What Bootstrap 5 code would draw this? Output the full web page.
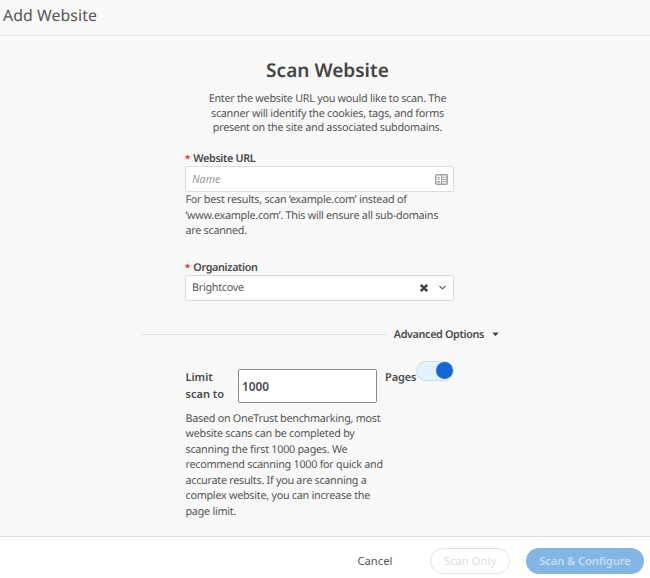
<!DOCTYPE html>
<html lang="en">
<head>
<meta charset="utf-8">
<meta name="viewport" content="width=device-width, initial-scale=1">
<title>Add Website</title>
<link href="https://cdn.jsdelivr.net/npm/bootstrap@5.3.0/dist/css/bootstrap.min.css" rel="stylesheet">
<style>
body{font-family:"Noto Sans","Open Sans",sans-serif;font-size:10.8px;line-height:15.5px;color:#565656;background:#f8f8f8;height:578px;overflow:hidden;text-rendering:geometricPrecision;letter-spacing:-.27px}
.top-bar{height:36px;border-color:#e0e0e0!important;padding:0 3px 5px}
.top-bar h1{font-size:15.8px;line-height:20px;color:#555;letter-spacing:.1px}
.center-block{margin-left:5px;padding-top:.1px}
.scan-title{font-size:19px;line-height:26px;margin-top:21px;color:#444;letter-spacing:.03px}
.intro{line-height:14.4px;margin-top:8px;padding-top:1px}
.form-col{width:269px;margin-left:185px}
.form-col p,.limit-label{padding-left:.5px}
.url-group{padding-top:16px}
.org-group{padding-top:21px}
.field-label{line-height:16px;margin-bottom:-1px;color:#4a4a4a;letter-spacing:-.36px}
.field-label .req{color:#e02020;margin-right:3.500px;font-size:9.500px}
.field-box{height:26px;border:1px solid #dcdcdc;border-radius:2px;background:#fff;padding:0 5px 0 6px}
.field-box input{font-size:10.8px;line-height:16px;color:#565656;letter-spacing:-.05px}
.field-box input::placeholder{color:#9a9a9a;font-style:italic}
.advanced{margin:26px 151px 0 141px;height:16px;color:#4a4a4a;letter-spacing:-.36px}
.advanced .rule{height:1px;background:#e2e2e2}
.limit-row{height:41px;margin-top:26px;color:#4a4a4a;line-height:17px;font-size:11px;letter-spacing:0}
.limit-label{width:53px}
.limit-box{width:139px;height:34px;border:1px solid #8c8c8c;border-radius:2px;padding:0 3px;font-size:11.800px;color:#4a4a4a}
.pages-label{width:31px;margin-left:8px;letter-spacing:-.1px}
.toggle{width:38px;height:20px;border:1px solid #dcdcdc;border-radius:10px;background:#e0f2fe;margin-top:-8px}
.toggle i{width:17px;height:17px;border-radius:50%;background:#1466d0}
.bench{padding-top:1px}
.foot{height:42px;border-color:#dadada!important;padding:6px 6px 0 0}
.foot .btn{font-size:11.200px;line-height:16px;height:26px;padding:0;border-radius:13px;opacity:1;letter-spacing:.05px}
.foot .btn-cancel{width:60px;color:#565656}
.foot .btn-only{width:80px;margin:0 16px 0 25px;border:1px solid #e0e0e0;color:#dcdcdc}
.foot .btn-config{width:118px;background:#84b6e4;color:#c4dcf3;border:0;letter-spacing:-.13px}
</style>
</head>
<body class="d-flex flex-column">
<header class="top-bar d-flex align-items-center border-bottom flex-shrink-0"><h1 class="fw-normal mb-0 text-nowrap">Add Website</h1></header>
<main class="flex-grow-1">
  <div class="text-center text-nowrap center-block">
    <h2 class="scan-title fw-semibold mb-0">Scan Website</h2>
    <p class="intro mb-0">Enter the website URL you would like to scan. The<br>scanner will identify the cookies, tags, and forms<br>present on the site and associated subdomains.</p>
  </div>
  <form class="form-col text-nowrap">
    <div class="url-group">
      <label class="field-label fw-semibold d-block" for="url"><span class="req">*</span>Website URL</label>
      <div class="field-box d-flex align-items-center">
        <input id="url" class="form-control border-0 p-0 bg-transparent shadow-none" placeholder="Name">
        <svg class="flex-shrink-0" width="13" height="11" viewBox="0 0 13 11" fill="none" stroke="#a2a2a2"><rect x=".75" y=".75" width="11.5" height="9.5" rx="1" stroke-width="1.5"/><path d="M6.5 1v9M7 3.3h5M7 5.5h5M7 7.7h5" stroke-width="1.1"/><path d="M3.6 3v3M2.2 7.7h2.8" stroke-width="1.5"/></svg>
      </div>
      <p class="mb-0">For best results, scan ‘example.com’ instead of<br>‘www.example.com’. This will ensure all sub-domains<br>are scanned.</p>
    </div>
    <div class="org-group">
      <span class="field-label fw-semibold d-block"><span class="req">*</span>Organization</span>
      <div class="field-box d-flex align-items-center">
        <span class="flex-grow-1">Brightcove</span>
        <svg width="10" height="10" viewBox="0 0 10 10"><path d="M1.800 1.800l6.400 6.400M8.200 1.800l-6.400 6.400" stroke="#444" stroke-width="2.6"/></svg>
        <svg class="ms-2" width="11" height="9" viewBox="0 0 11 9" fill="none"><path d="M2.500 3l3 2.800L8.500 3" stroke="#555" stroke-width="1.1"/></svg>
      </div>
    </div>
  </form>
  <div class="advanced d-flex align-items-center text-nowrap fw-semibold">
    <div class="rule flex-grow-1 me-2"></div><span>Advanced Options</span>
    <svg class="ms-2" width="7" height="5" viewBox="0 0 7 5"><path d="M.3.5h6.400L3.500 4.300z" fill="#444"/></svg>
  </div>
  <div class="form-col text-nowrap">
    <div class="limit-row d-flex align-items-start fw-semibold">
      <span class="limit-label">Limit<br>scan to</span>
      <input class="limit-box fw-semibold" value="1000" aria-label="Page limit">
      <span class="pages-label">Pages</span>
      <span class="toggle d-flex align-items-center justify-content-end"><i></i></span>
    </div>
    <p class="bench mb-0">Based on OneTrust benchmarking, most<br>website scans can be completed by<br>scanning the first 1000 pages. We<br>recommend scanning 1000 for quick and<br>accurate results. If you are scanning a<br>complex website, you can increase the<br>page limit.</p>
  </div>
</main>
<footer class="foot bg-white border-top d-flex justify-content-end align-items-center flex-shrink-0">
  <button class="btn btn-cancel">Cancel</button><button class="btn btn-only" disabled>Scan Only</button><button class="btn btn-config fw-semibold" disabled>Scan &amp; Configure</button>
</footer>
<script src="https://cdn.jsdelivr.net/npm/bootstrap@5.3.0/dist/js/bootstrap.bundle.min.js"></script>
</body>
</html>
